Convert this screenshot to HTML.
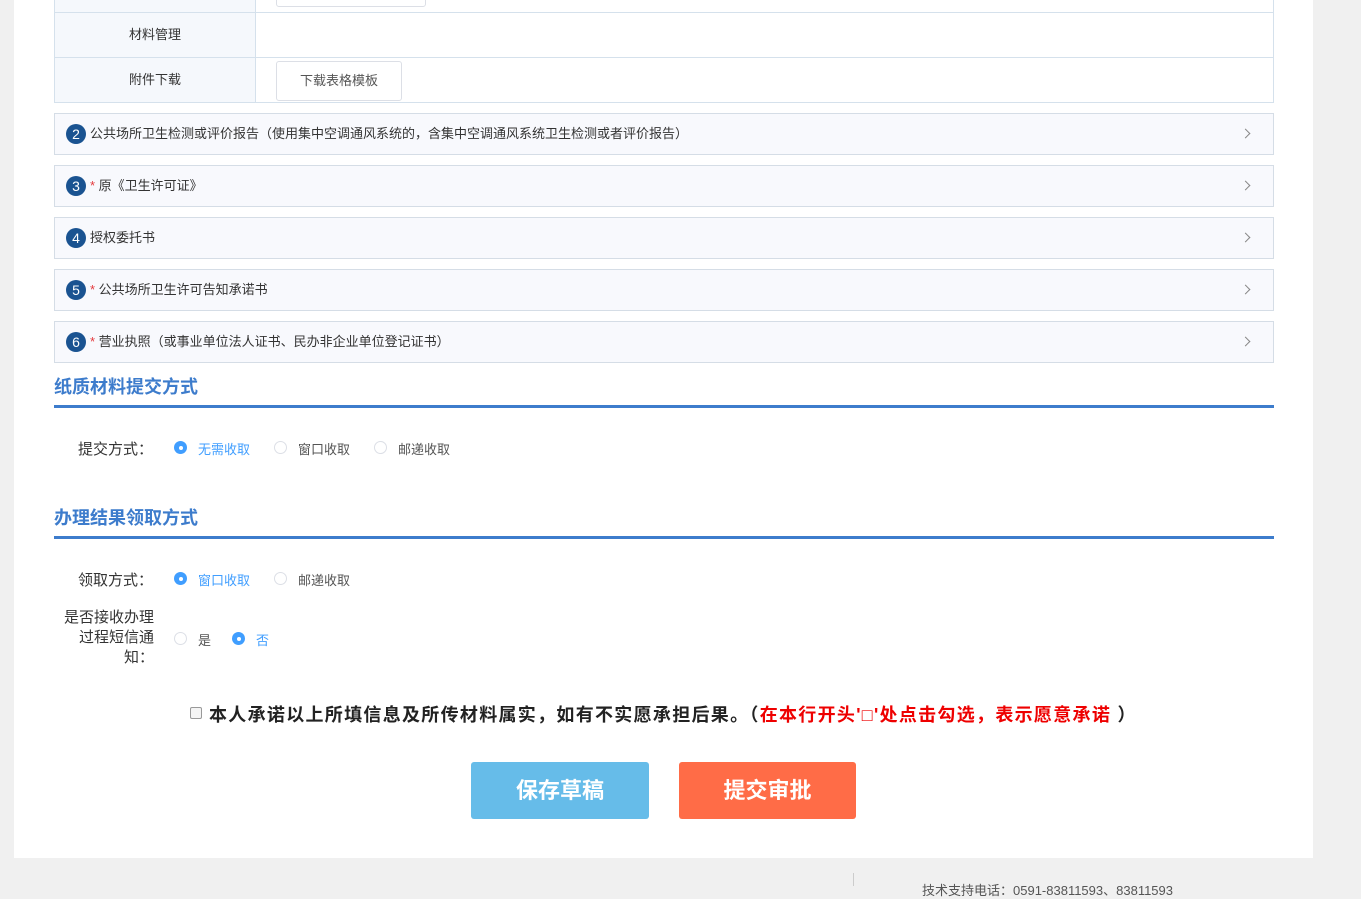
<!DOCTYPE html>
<html><head><meta charset="utf-8"><style>
*{margin:0;padding:0;box-sizing:border-box}
body{width:1361px;height:886px;overflow:hidden;background:#f0f0f0;font-family:"Liberation Sans","Noto Sans CJK SC",sans-serif;color:#333;position:relative}
.main{position:absolute;left:14px;top:0;width:1299px;height:858px;background:#fff}
.abs{position:absolute}
.tbl{position:absolute;left:54px;width:1220px;border:1px solid #d5e1ec;border-top:none}
.row{position:absolute;left:0;width:1218px;height:45px;border-top:1px solid #d5e1ec}
.lbl{position:absolute;left:0;top:0;width:201px;height:100%;background:#f5f8fc;border-right:1px solid #d5e1ec;font-size:13px;text-align:center;line-height:44px}
.btn{position:absolute;background:#fff;border:1px solid #dcdfe6;border-radius:3px;font-size:13px;text-align:center;color:#555}
.acc{position:absolute;left:54px;width:1220px;height:42px;border:1px solid #d5dde6;background:#f8f9fd;font-size:13px;line-height:40px}
.num{position:absolute;left:11px;top:10px;width:20px;height:20px;border-radius:50%;background:#1a5391;color:#fff;font-size:14px;line-height:20px;text-align:center}
.acc .t{position:absolute;left:35px;top:0}
.star{color:#e4393c}
.chev{position:absolute;right:24px;top:16px;width:7px;height:7px;border-right:1px solid #888;border-top:1px solid #888;transform:rotate(45deg)}
.h{position:absolute;left:54px;width:1220px;font-size:18px;font-weight:bold;color:#3d7ccc;border-bottom:3px solid #3d7ccc}
.radio{position:absolute;width:13px;height:13px;border-radius:50%;border:1px solid #dcdfe6;background:#fff}
.radio.on{border:none;background:#409eff}
.radio.on:after{content:"";position:absolute;left:4.5px;top:4.5px;width:4px;height:4px;border-radius:50%;background:#fff}
.lt{position:absolute;font-size:13px;color:#555}
.lt.on{color:#409eff}
.fl{position:absolute;font-size:15px;color:#333;text-align:right}
</style></head><body>
<div class="main"></div>
<div class="tbl" style="top:0;height:103px">
 <div class="row" style="top:-34px;height:46px"><div class="lbl"></div><div class="btn" style="left:221px;top:26px;width:150px;height:14px"></div></div>
 <div class="row" style="top:12px"><div class="lbl">材料管理</div></div>
 <div class="row" style="top:57px"><div class="lbl">附件下载</div><div class="btn" style="left:221px;top:3px;width:126px;height:40px;line-height:38px">下载表格模板</div></div>
</div>
<div class="acc" style="top:113px"><div class="num">2</div><div class="t">公共场所卫生检测或评价报告（使用集中空调通风系统的，含集中空调通风系统卫生检测或者评价报告）</div><div class="chev"></div></div>
<div class="acc" style="top:165px"><div class="num">3</div><div class="t"><span class="star">*</span> 原《卫生许可证》</div><div class="chev"></div></div>
<div class="acc" style="top:217px"><div class="num">4</div><div class="t">授权委托书</div><div class="chev"></div></div>
<div class="acc" style="top:269px"><div class="num">5</div><div class="t"><span class="star">*</span> 公共场所卫生许可告知承诺书</div><div class="chev"></div></div>
<div class="acc" style="top:321px"><div class="num">6</div><div class="t"><span class="star">*</span> 营业执照（或事业单位法人证书、民办非企业单位登记证书）</div><div class="chev"></div></div>

<div class="h" style="top:373px;height:35px">纸质材料提交方式</div>
<div class="fl" style="left:58px;top:438px;width:95px">提交方式：</div>
<div class="radio on" style="left:174px;top:441px"></div><div class="lt on" style="left:198px;top:439px">无需收取</div>
<div class="radio" style="left:274px;top:441px"></div><div class="lt" style="left:298px;top:439px">窗口收取</div>
<div class="radio" style="left:374px;top:441px"></div><div class="lt" style="left:398px;top:439px">邮递收取</div>

<div class="h" style="top:504px;height:35px">办理结果领取方式</div>
<div class="fl" style="left:58px;top:569px;width:95px">领取方式：</div>
<div class="radio on" style="left:174px;top:572px"></div><div class="lt on" style="left:198px;top:570px">窗口收取</div>
<div class="radio" style="left:274px;top:572px"></div><div class="lt" style="left:298px;top:570px">邮递收取</div>
<div class="fl" style="left:54px;top:608px;width:100px;line-height:20px">是否接收办理过程短信通知：</div>
<div class="radio" style="left:174px;top:632px"></div><div class="lt" style="left:198px;top:630px">是</div>
<div class="radio on" style="left:232px;top:632px"></div><div class="lt on" style="left:256px;top:630px">否</div>

<div class="abs" style="left:190px;top:707px;width:12px;height:12px;border:1px solid #999;border-radius:2px;background:#f4f4f4"></div>
<div class="abs" style="left:209px;top:701px;font-size:18px;font-weight:bold;color:#222;white-space:nowrap;letter-spacing:1.3px">本人承诺以上所填信息及所传材料属实，如有不实愿承担后果。（<span style="color:#e00">在本行开头'□'处点击勾选，表示愿意承诺</span> ）</div>

<div class="abs" style="left:471px;top:762px;width:178px;height:57px;background:#66bce9;border-radius:3px;color:#fff;font-size:22px;font-weight:bold;text-align:center;line-height:57px">保存草稿</div>
<div class="abs" style="left:679px;top:762px;width:177px;height:57px;background:#ff6c47;border-radius:3px;color:#fff;font-size:22px;font-weight:bold;text-align:center;line-height:57px">提交审批</div>

<div class="abs" style="left:853px;top:873px;width:1px;height:13px;background:#ccc"></div>
<div class="abs" style="left:922px;top:880px;font-size:13px;color:#555;white-space:nowrap">技术支持电话：0591-83811593、83811593</div>
</body></html>
